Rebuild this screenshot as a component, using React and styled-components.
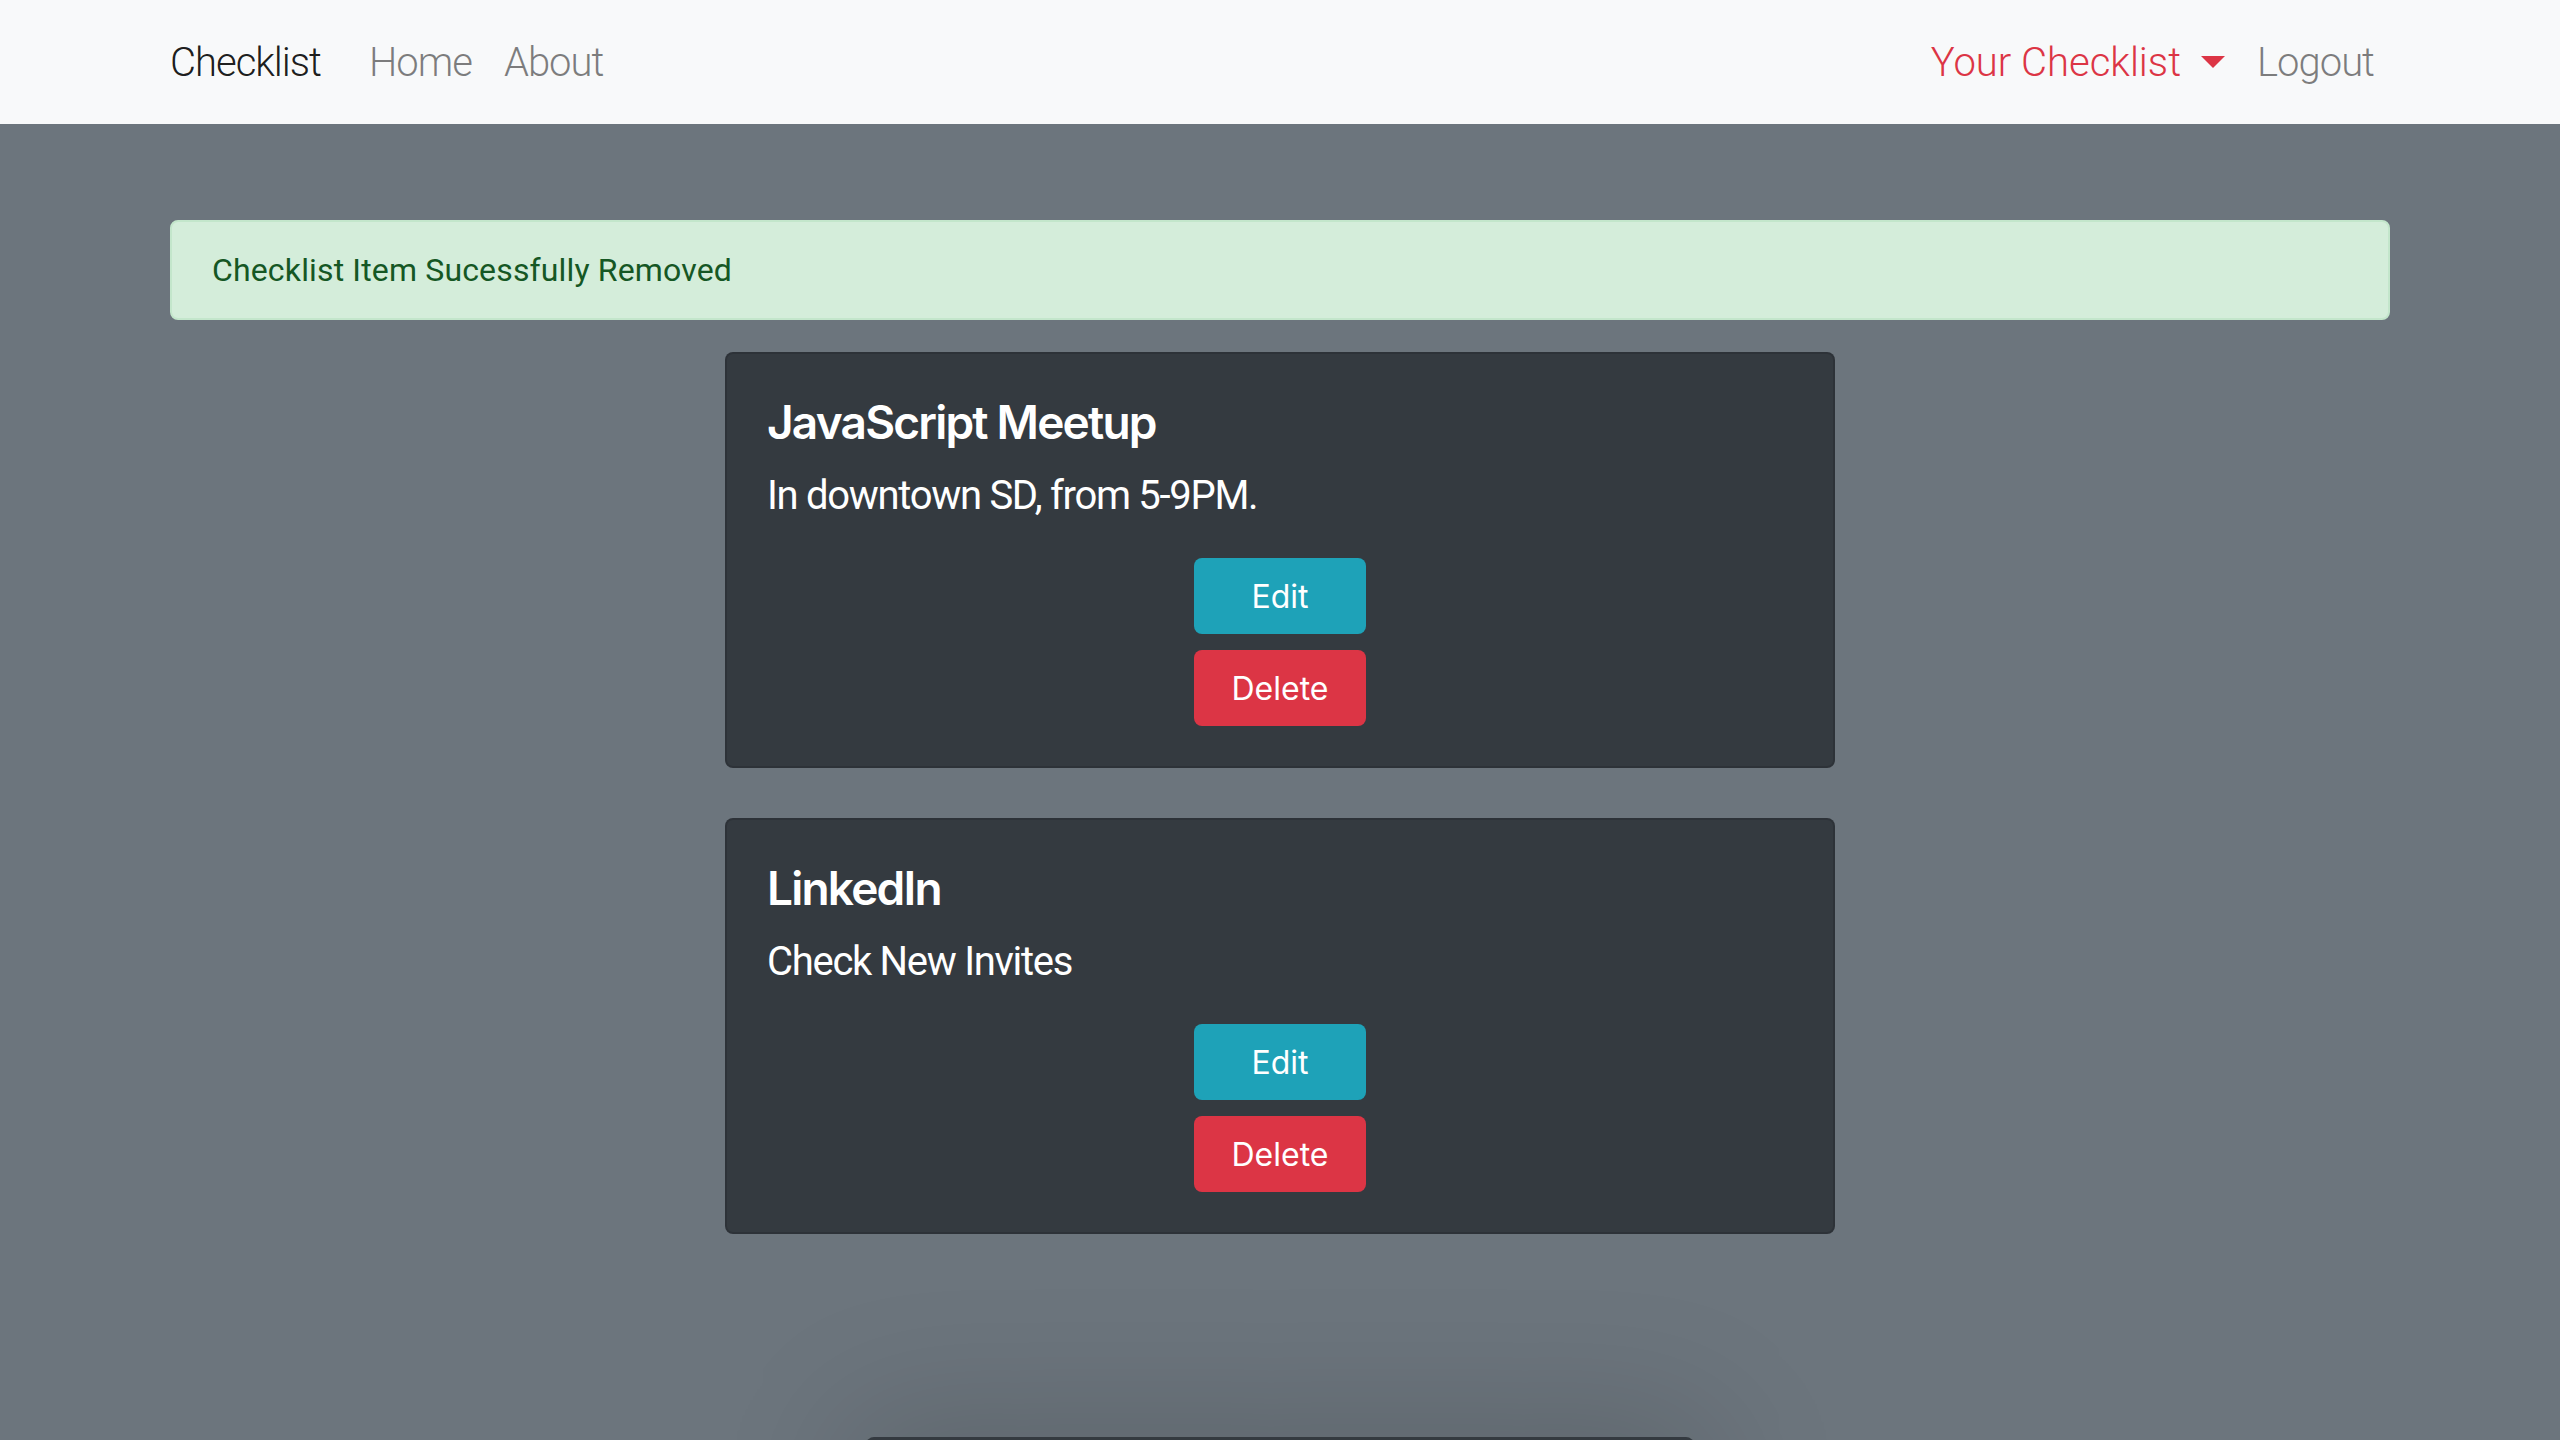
import React from 'react'
import styled, { createGlobalStyle } from 'styled-components'

const GlobalStyle = createGlobalStyle`
  html, body {
    margin: 0;
    padding: 0;
    background: #6c757d;
    font-family: "Inter", "Liberation Sans", sans-serif;
  }
  * { box-sizing: border-box; }
`

const NavBar = styled.nav`
  background: #f8f9fa;
  height: 124px;
`
const NavInner = styled.div`
  width: 2220px;
  height: 100%;
  margin: 0 auto;
  display: flex;
  align-items: center;
  font-family: "Roboto", "Liberation Sans", sans-serif;
  font-weight: 300;
  font-size: 40px;
`
const Brand = styled.a`
  color: rgba(0,0,0,0.9);
  margin-right: 32px;
  letter-spacing: -1px;
`
const NavLink = styled.a`
  color: ${p => (p.$active ? '#dc3545' : 'rgba(0,0,0,0.5)')};
  padding: 0 16px;
  display: flex;
  align-items: center;
  letter-spacing: ${p => (p.$active ? '0' : '-1px')};
  cursor: pointer;
`
const Caret = styled.span`
  margin-left: 20px;
  width: 0;
  height: 0;
  border-top: 12px solid #dc3545;
  border-left: 12px solid transparent;
  border-right: 12px solid transparent;
`
const RightGroup = styled.div`
  margin-left: auto;
  display: flex;
  align-items: center;
`

const Main = styled.main`
  width: 2220px;
  margin: 0 auto;
  padding-top: 96px;
`
const Alert = styled.div`
  background: #d4edda;
  border: 2px solid #c3e6cb;
  color: #155724;
  border-radius: 8px;
  padding: 24px 40px;
  font-size: 32px;
  line-height: 48px;
  letter-spacing: 0.15px;
  margin-bottom: 32px;
  font-family: "Roboto", "Liberation Sans", sans-serif;
`
const Card = styled.div`
  width: 1110px;
  margin: 0 auto 50px;
  background: #343a40;
  border: 2px solid rgba(0,0,0,0.125);
  border-radius: 8px;
  padding: 40px;
  color: #fff;
`
const Title = styled.h4`
  margin: 0 0 16px;
  font-size: 46px;
  line-height: 1.2;
  font-weight: 600;
  letter-spacing: -1.8px;
  padding-top: 1px;
`
const Text = styled.p`
  margin: 0 0 32px;
  font-family: "Roboto", "Liberation Sans", sans-serif;
  font-size: 40px;
  line-height: 1.5;
  font-weight: 400;
  letter-spacing: -1.3px;
`
const Actions = styled.div`
  display: flex;
  flex-direction: column;
  align-items: center;
  gap: 16px;
`
const Button = styled.button`
  width: 172px;
  height: 76px;
  border: none;
  border-radius: 8px;
  font-family: "Inter", sans-serif;
  font-size: 32px;
  color: #fff;
  background: ${p => (p.$variant === 'danger' ? '#dc3545' : '#1ea2b8')};
  cursor: pointer;
`
const Footer = styled.div`
  width: 828px;
  height: 120px;
  margin: 203px auto 0;
  background: #343a40;
  border-radius: 8px 8px 0 0;
  box-shadow: 0 0 140px 20px rgba(0,0,0,0.14);
`

const items = [
  { title: 'JavaScript Meetup', text: 'In downtown SD, from 5-9PM.' },
  { title: 'LinkedIn', text: 'Check New Invites' },
]

const App = () => {
  return (
    <>
      <GlobalStyle />
      <NavBar>
        <NavInner>
          <Brand>Checklist</Brand>
          <NavLink>Home</NavLink>
          <NavLink>About</NavLink>
          <RightGroup>
            <NavLink $active>Your Checklist<Caret /></NavLink>
            <NavLink>Logout</NavLink>
          </RightGroup>
        </NavInner>
      </NavBar>
      <Main>
        <Alert>Checklist Item Sucessfully Removed</Alert>
        {items.map(item => (
          <Card key={item.title}>
            <Title>{item.title}</Title>
            <Text>{item.text}</Text>
            <Actions>
              <Button>Edit</Button>
              <Button $variant="danger">Delete</Button>
            </Actions>
          </Card>
        ))}
        <Footer />
      </Main>
    </>
  )
}

export default App
